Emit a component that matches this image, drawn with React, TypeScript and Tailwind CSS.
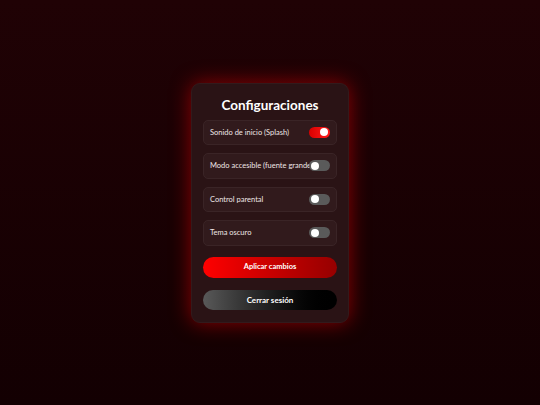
import React, { useState } from "react";

function Toggle({ on, onClick }: { on: boolean; onClick: () => void }) {
  return (
    <button
      onClick={onClick}
      className={
        "relative shrink-0 w-[21px] h-[11px] rounded-full " +
        (on ? "bg-gradient-to-r from-[#d90000] to-[#ff1a1a]" : "bg-[#5a5a5a]")
      }
    >
      <span
        className={
          "absolute top-[1.5px] w-[8px] h-[8px] rounded-full bg-white " +
          (on ? "right-[2px]" : "left-[2px]")
        }
      />
    </button>
  );
}

export default function App() {
  const [opts, setOpts] = useState([
    { label: "Sonido de inicio (Splash)", on: true },
    { label: "Modo accesible (fuente grande)", on: false },
    { label: "Control parental", on: false },
    { label: "Tema oscuro", on: false },
  ]);
  return (
    <div
      className="w-[540px] h-[405px] flex items-center justify-center bg-gradient-to-b from-[#200205] to-[#130002]"
      style={{ fontFamily: "Lato, 'Noto Sans', sans-serif" }}
    >
      <div className="w-[158px] rounded-[9px] bg-[#2a1315] border border-[#321a1c] shadow-[0_0_20px_rgba(255,0,0,0.5)] px-[11px] pt-[12px] pb-[12px] flex flex-col">
        <h1 className="text-white text-[13.5px] leading-[18px] font-bold text-center mb-[6px]">
          Configuraciones
        </h1>
        <div className="flex flex-col gap-[8px]">
          {opts.map((o, i) => (
            <div
              key={o.label}
              className="h-[25.5px] rounded-[5px] bg-[#311a1c] border border-[#3a2426] flex items-center pl-[6px] pr-[6px]"
            >
              <span className="flex-1 min-w-0 text-[7.5px] text-[#efe6e6] whitespace-nowrap leading-none">
                {o.label}
              </span>
              <Toggle
                on={o.on}
                onClick={() =>
                  setOpts(opts.map((p, j) => (j === i ? { ...p, on: !p.on } : p)))
                }
              />
            </div>
          ))}
        </div>
        <button className="mt-[11px] h-[21px] rounded-full bg-gradient-to-r from-[#ff0000] to-[#960000] text-white text-[7.5px] font-bold">
          Aplicar cambios
        </button>
        <button className="mt-[12px] h-[20px] rounded-full bg-gradient-to-r from-[#595959] to-[#000000] text-white text-[8px] font-bold">
          Cerrar sesión
        </button>
      </div>
    </div>
  );
}
